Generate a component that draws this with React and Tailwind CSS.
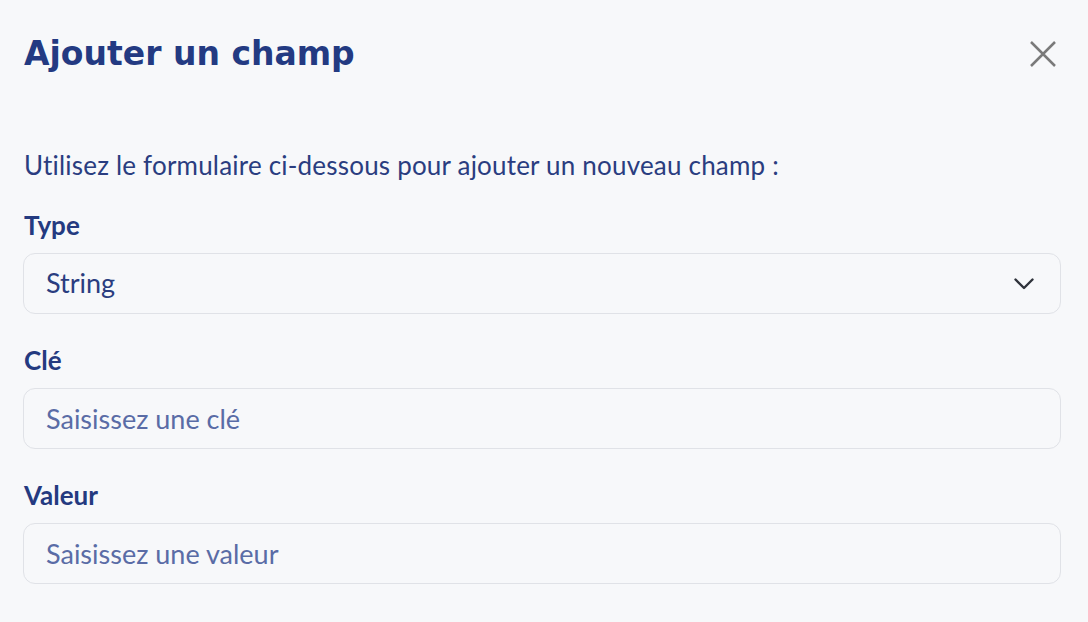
import React from "react";

const fields = [
  { label: "Clé", placeholder: "Saisissez une clé" },
  { label: "Valeur", placeholder: "Saisissez une valeur" },
];

function Label({ children }) {
  return <label className="block text-[26px] font-bold leading-[32px] text-[#243a80]">{children}</label>;
}

export default function App() {
  return (
    <div className="min-h-screen bg-[#f7f8fa] pl-[23px] pr-[27px] pt-[30px] font-['Lato',sans-serif]">
      <div className="flex h-[48px] items-center justify-between">
        <h1 className="pl-px font-['DejaVu_Sans',sans-serif] text-[33px] font-bold text-[#233a82]">
          Ajouter un champ
        </h1>
        <button className="mr-[-2px] flex h-10 w-10 items-center justify-center text-[#7a7a7a]">
          <svg width="26" height="26" viewBox="0 0 26 26" fill="none" stroke="currentColor" strokeWidth="2.5">
            <path d="M1 1L25 25M25 1L1 25" />
          </svg>
        </button>
      </div>

      <p className="mt-[71px] pl-px text-[26px] leading-[32px] tracking-[0.2px] text-[#2a3d80]">
        Utilisez le formulaire ci-dessous pour ajouter un nouveau champ :
      </p>

      <div className="mt-[28px] flex flex-col gap-[30px] pl-px">
        <div>
          <Label>Type</Label>
          <div className="ml-[-1px] mt-[12px] flex h-[61px] items-center justify-between rounded-xl border border-[#e0e2e7] bg-[#f7f8fa] pl-[22px] pr-[26px]">
            <span className="text-[27px] text-[#2a3d80]">String</span>
            <svg width="20" height="12" viewBox="0 0 20 12" fill="none" stroke="#2f333b" strokeWidth="2.4" strokeLinecap="round" strokeLinejoin="round">
              <path d="M1.5 1.5L10 10L18.5 1.5" />
            </svg>
          </div>
        </div>
        {fields.map((f) => (
          <div key={f.label}>
            <Label>{f.label}</Label>
            <input
              placeholder={f.placeholder}
              className="ml-[-1px] mt-[12px] block h-[61px] w-[calc(100%+1px)] rounded-xl border border-[#e0e2e7] bg-[#f7f8fa] px-[22px] text-[27px] text-[#2a3d80] outline-none placeholder:text-[#5a6ca6]"
            />
          </div>
        ))}
      </div>
    </div>
  );
}
